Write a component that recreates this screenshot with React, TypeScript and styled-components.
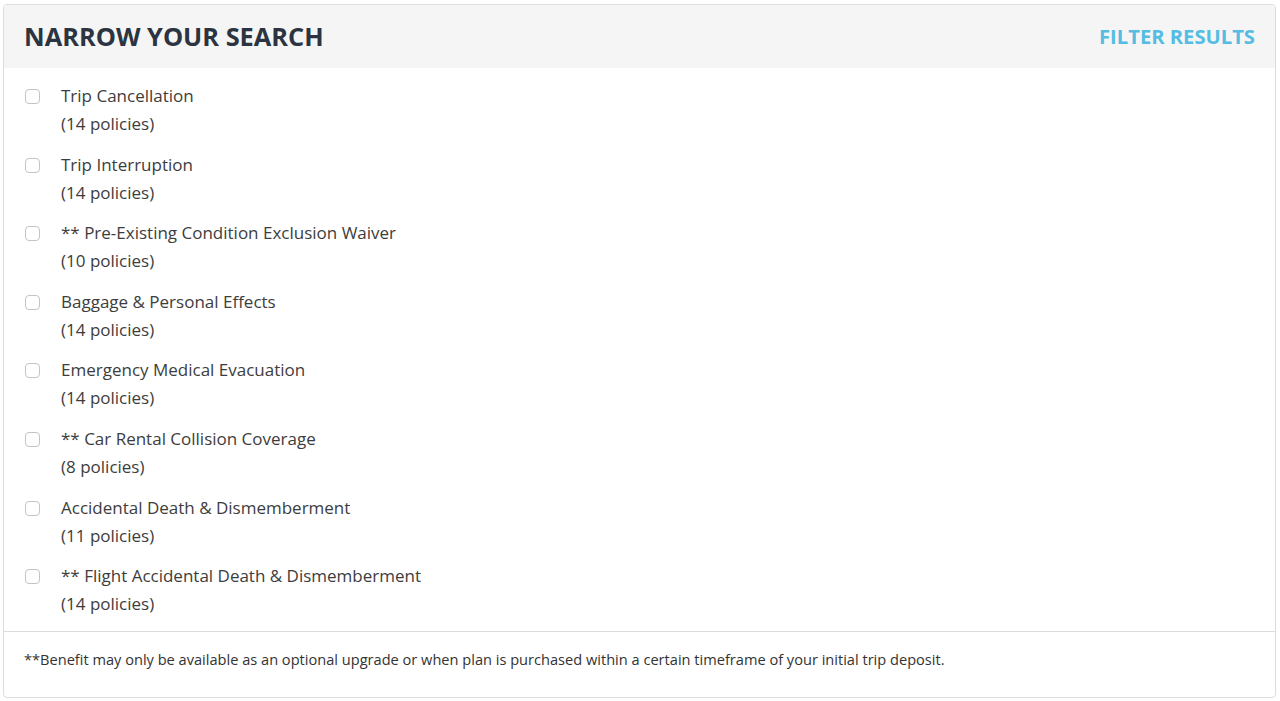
import * as React from "react"
import styled, { createGlobalStyle } from "styled-components"

const GlobalStyle = createGlobalStyle`
  html, body {
    margin: 0;
    padding: 0;
    background: #ffffff;
  }
  body {
    font-family: "Open Sans", "Noto Sans", "Liberation Sans", sans-serif;
    -webkit-font-smoothing: antialiased;
  }
`

const Page = styled.div`
  padding: 4px 4px 4px 3px;
`

const Panel = styled.section`
  border: 1px solid #dcdcdc;
  border-radius: 4px;
  overflow: hidden;
  background: #fff;
`

const Header = styled.header`
  height: 63px;
  background: #f5f5f5;
  display: flex;
  align-items: center;
  justify-content: space-between;
  padding: 0 20px 2px 20px;
  box-sizing: border-box;
`

const Title = styled.h2`
  margin: 0;
  font-size: 25.4px;
  font-weight: 700;
  color: #2b3440;
`

const FilterLink = styled.a`
  font-size: 20.2px;
  font-weight: 700;
  color: #55bde3;
  text-decoration: none;
  cursor: pointer;
`

const List = styled.ul`
  list-style: none;
  margin: 0;
  padding: 14px 20px 0 21px;
  border-bottom: 1px solid #dcdcdc;
`

const Item = styled.li`
  display: flex;
  align-items: flex-start;
  gap: 21px;
  margin-bottom: 12.6px;
`

const Box = styled.input.attrs({ type: "checkbox" })`
  appearance: none;
  flex: none;
  width: 15px;
  height: 15px;
  margin: 7px 0 0 0;
  border: 1px solid #c4c4c4;
  border-radius: 4px;
  background: #fff;
  cursor: pointer;
`

const Label = styled.label`
  font-size: 17px;
  line-height: 28px;
  color: #3d3d3d;
`

const Count = styled.span`
  display: block;
`

const Footer = styled.footer`
  padding: 0 20px 10px;
  height: 65px;
  box-sizing: border-box;
  display: flex;
  align-items: center;
  font-size: 14.6px;
  color: #333;
`

const filters = [
  { name: "Trip Cancellation", count: 14 },
  { name: "Trip Interruption", count: 14 },
  { name: "** Pre-Existing Condition Exclusion Waiver", count: 10 },
  { name: "Baggage & Personal Effects", count: 14 },
  { name: "Emergency Medical Evacuation", count: 14 },
  { name: "** Car Rental Collision Coverage", count: 8 },
  { name: "Accidental Death & Dismemberment", count: 11 },
  { name: "** Flight Accidental Death & Dismemberment", count: 14 },
]

export default function App() {
  return (
    <>
      <GlobalStyle />
      <Page>
        <Panel>
          <Header>
            <Title>NARROW YOUR SEARCH</Title>
            <FilterLink>FILTER RESULTS</FilterLink>
          </Header>
          <List>
            {filters.map((f, i) => (
              <Item key={i}>
                <Box id={"f" + i} />
                <Label htmlFor={"f" + i}>
                  {f.name}
                  <Count>({f.count} policies)</Count>
                </Label>
              </Item>
            ))}
          </List>
          <Footer>
            **Benefit may only be available as an optional upgrade or when plan is purchased within a certain
            timeframe of your initial trip deposit.
          </Footer>
        </Panel>
      </Page>
    </>
  )
}
